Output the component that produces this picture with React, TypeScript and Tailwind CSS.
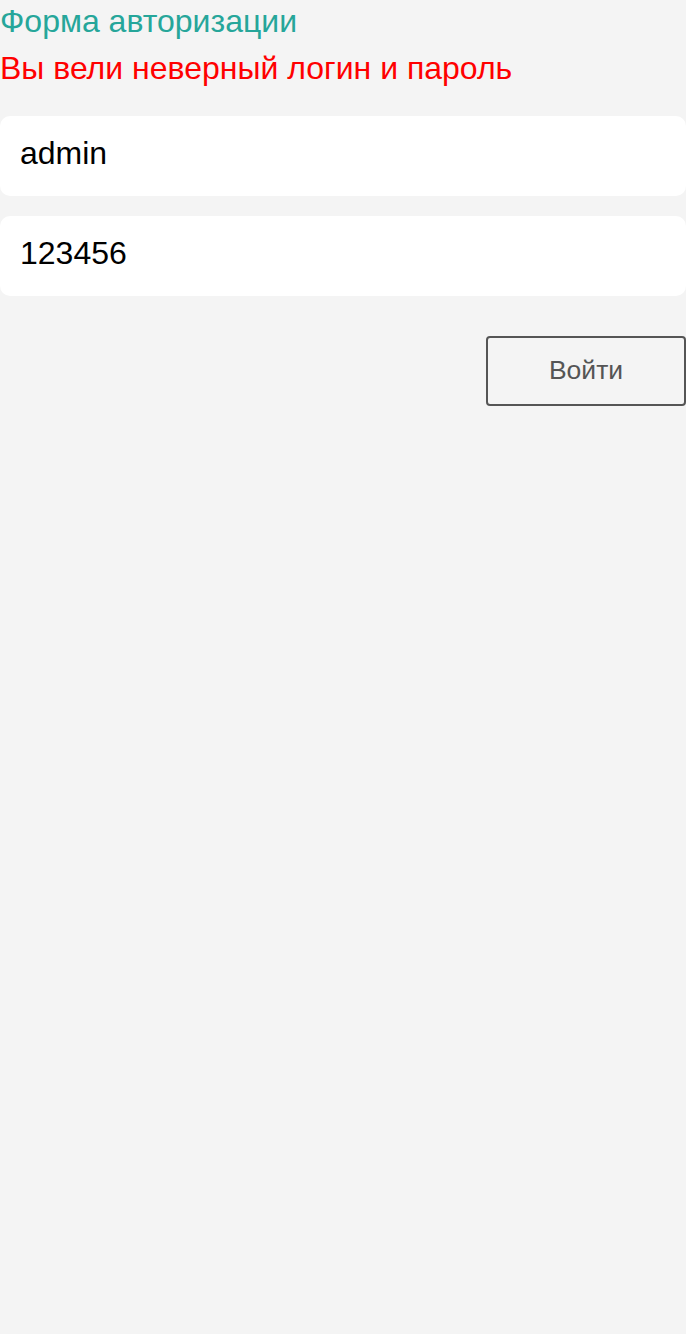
import { useState } from "react";

export default function App() {
  const [login, setLogin] = useState<string>("admin");
  const [password, setPassword] = useState<string>("123456");

  return (
    <div className="min-h-[1334px] w-full bg-[#f4f4f4] font-['Liberation_Sans',Arial,sans-serif]">
      <h1 className="text-[32px] leading-[42px] text-[#26a69a]">Форма авторизации</h1>
      <p className="mt-[5px] text-[32px] leading-[42px] text-[#ff0000]">
        Вы вели неверный логин и пароль
      </p>

      <div className="mt-[27px] flex flex-col gap-[20px]">
        <input
          value={login}
          onChange={(e) => setLogin(e.target.value)}
          className="h-[80px] w-full rounded-[10px] bg-white px-[20px] pb-[6px] text-[32px] text-black outline-none"
        />
        <input
          value={password}
          onChange={(e) => setPassword(e.target.value)}
          className="h-[80px] w-full rounded-[10px] bg-white px-[20px] pb-[6px] text-[32px] text-black outline-none"
        />
      </div>

      <div className="mt-[40px] flex justify-end">
        <button className="h-[70px] w-[200px] rounded-[4px] border-2 border-[#555] text-[26.5px] text-[#555]">
          Войти
        </button>
      </div>
    </div>
  );
}
